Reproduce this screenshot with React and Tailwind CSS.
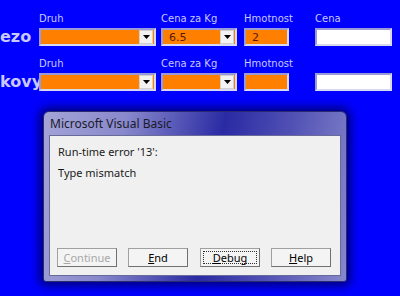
import React from "react";

const Arrow = () => (
  <div className="flex h-[14px] w-[14px] items-center justify-center border border-[#d0d0d0] bg-[#f2f2f2]">
    <svg width="7" height="4" viewBox="0 0 7 4">
      <polygon points="0,0 7,0 3.5,4" fill="#000" />
    </svg>
  </div>
);

const Box = ({ value, combo, white }) => (
  <div
    className={`flex h-[18px] w-full items-center justify-between border-2 border-t-[#9a9ad8] border-l-[#9a9ad8] border-r-[#d8d8f0] border-b-[#d8d8f0] pl-[6px] pr-[1px] ${
      white ? "bg-white" : "bg-[#ff8000]"
    }`}
  >
    <span className="text-[11px] leading-none text-[#5a1a00]">{value}</span>
    {combo && <Arrow />}
  </div>
);

const Field = ({ label, width, className = "", ...rest }) => (
  <div className={`flex shrink-0 flex-col gap-[4px] ${className}`} style={{ width }}>
    <span className="h-[10px] whitespace-nowrap text-[10px] leading-none text-[#c8c8ff]">{label}</span>
    <Box {...rest} />
  </div>
);

const FormRow = ({ name, labels, values }) => (
  <div className="flex items-end">
    <div className="w-[39px] whitespace-nowrap pb-[1px] text-[16px] font-bold leading-none text-[#c8c8ff]">
      {name}
    </div>
    <div className="flex gap-[5px]">
      <Field label={labels[0]} width={117} combo />
      <Field label={labels[1]} width={76} combo value={values[0]} />
      <Field label={labels[2]} width={45} className="ml-[2px]" value={values[1]} />
      <Field label={labels[3]} width={77} className="ml-[21px]" white />
    </div>
  </div>
);

const DlgButton = ({ children, focus, disabled }) => (
  <div className="h-[19px] w-[60px] border border-[#a0a0a0] border-r-[#707070] border-b-[#707070] bg-[#f4f4f4] p-[2px]">
    <div
      className={`flex h-full items-center justify-center text-[11px] leading-none ${
        focus ? "border border-dotted border-[#303030]" : ""
      } ${disabled ? "text-[#a8a8a8]" : "text-black"}`}
    >
      {children}
    </div>
  </div>
);

export default function App() {
  return (
    <div
      className="relative h-[296px] w-[400px] overflow-hidden bg-[#0000ff]"
      style={{ fontFamily: "'DejaVu Sans', 'Liberation Sans', sans-serif" }}
    >
      <div className="flex flex-col gap-[13px] pt-[14px]">
        <FormRow
          name="ezo"
          labels={["Druh", "Cena za Kg", "Hmotnost", "Cena"]}
          values={["6.5", "2"]}
        />
        <FormRow
          name="kovy"
          labels={["Druh", "Cena za Kg", "Hmotnost", ""]}
          values={["", ""]}
        />
      </div>

      {/* error dialog */}
      <div className="absolute left-[43px] top-[111px] flex h-[171px] w-[304px] flex-col rounded-t-[6px] rounded-b-[3px] border border-[#2a2a70] bg-[linear-gradient(100deg,#a4a4d8_0%,#8888cc_25%,#2a2aa4_55%,#5050b4_75%,#8888cc_100%)] px-[5px] pb-[5px] shadow-[0_0_10px_4px_rgba(0,0,80,0.75)]">
        <div
          className="flex h-[23px] items-center pl-[1px] text-[12px] text-[#1a1a2a]"
          style={{ fontFamily: "'Noto Sans', 'DejaVu Sans', sans-serif" }}
        >
          Microsoft Visual Basic
        </div>
        <div
          className="flex flex-1 flex-col border border-[#6a6a9a] bg-[#f0f0f0] px-[7px] pb-[8px]"
          style={{ fontFamily: "'Noto Sans', 'DejaVu Sans', sans-serif" }}
        >
          <div className="ml-[1px] mt-[9px] text-[11px] leading-[14px] text-[#1a1a1a]">Run-time error '13':</div>
          <div className="ml-[1px] mt-[7px] text-[11px] leading-[14px] text-[#1a1a1a]">Type mismatch</div>
          <div className="mt-auto flex gap-[11px]">
            <DlgButton disabled>
              <span className="underline">C</span>ontinue
            </DlgButton>
            <DlgButton>
              <span className="underline">E</span>nd
            </DlgButton>
            <div className="ml-[1px]">
              <DlgButton focus>
                <span className="underline">D</span>ebug
              </DlgButton>
            </div>
            <DlgButton>
              <span className="underline">H</span>elp
            </DlgButton>
          </div>
        </div>
      </div>
    </div>
  );
}
